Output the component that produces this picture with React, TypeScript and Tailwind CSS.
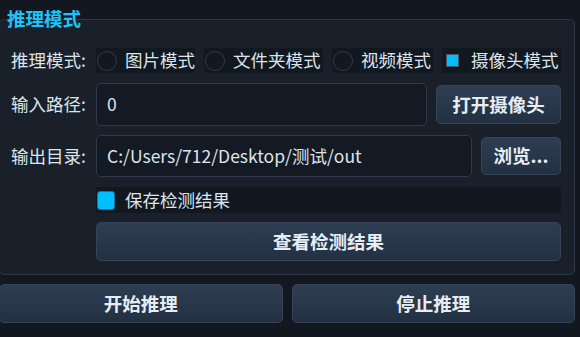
import type React from "react"

const font = { fontFamily: '"Noto Sans CJK SC", "Noto Sans", sans-serif' }

const Radio: React.FC<{ label: string; width: string; checked?: boolean }> = ({ label, width, checked }) => (
  <div className={`flex items-center h-[25px] bg-[#121820] ${width}`}>
    <div className="w-[21px] flex items-center justify-center">
      {checked ? (
        <div className="w-[13px] h-[13px] bg-[#00bfff] border border-[#4a5668]" />
      ) : (
        <div className="w-[20px] h-[20px] rounded-full border border-[#2f3b4b]" />
      )}
    </div>
    <span className="ml-[8px] whitespace-nowrap">{label}</span>
  </div>
)

const Button: React.FC<{ children: React.ReactNode; className?: string }> = ({ children, className }) => (
  <button
    className={`flex items-center justify-center rounded-[5px] border border-[#354457] bg-gradient-to-b from-[#2e3e52] to-[#223042] text-[18.5px] font-bold text-[#e6edf5] ${className ?? ""}`}
  >
    {children}
  </button>
)

export default function App() {
  return (
    <div className="w-[580px] h-[337px] overflow-hidden bg-[#131820] text-[17.5px] text-[#dde4ec]" style={font}>
      <div className="relative mt-[19px] -ml-px w-[576px] h-[256px] rounded-[5px] border border-[#2c3848] bg-[#19202a] pt-[28px] pl-[11px] pr-[13px] pb-[12px]">
        <div className="absolute -top-[14px] left-[7px] text-[18.5px] font-bold leading-[24px] text-[#1cc4f8]">推理模式</div>

        <div className="flex items-center h-[25px]">
          <span className="w-[85px] whitespace-nowrap">推理模式:</span>
          <div className="flex gap-[9px]">
            <Radio label="图片模式" width="w-[99px]" />
            <Radio label="文件夹模式" width="w-[119px]" />
            <Radio label="视频模式" width="w-[101px]" />
            <Radio label="摄像头模式" width="w-[119px]" checked />
          </div>
        </div>

        <div className="flex items-center h-[43px] mt-[10px]">
          <span className="w-[85px]">输入路径:</span>
          <div className="flex-1 h-[43px] flex items-center rounded-[5px] border border-[#2c3a4c] bg-[#141a23] pl-[10px]">0</div>
          <Button className="ml-[9px] w-[125px] h-[39px]">打开摄像头</Button>
        </div>

        <div className="flex items-center h-[42px] mt-[9px]">
          <span className="w-[85px]">输出目录:</span>
          <div className="flex-1 h-[42px] flex items-center rounded-[5px] border border-[#2c3a4c] bg-[#141a23] pl-[10px] whitespace-nowrap">
            C:/Users/712/Desktop/测试/out
          </div>
          <Button className="ml-[9px] w-[80px] h-[38px]">浏览...</Button>
        </div>

        <div className="flex items-center h-[26px] mt-[10px] ml-[85px] bg-[#111820]">
          <div className="ml-px w-[18px] h-[19px] rounded-[3px] bg-[#00bfff] border border-[#1e6e96]" />
          <span className="ml-[10px]">保存检测结果</span>
        </div>

        <Button className="mt-[9px] ml-[85px] w-[465px] h-[39px]">查看检测结果</Button>
      </div>

      <div className="flex gap-[9px] mt-[9px] -ml-px w-[576px]">
        <Button className="flex-1 h-[39px]">开始推理</Button>
        <Button className="flex-1 h-[39px]">停止推理</Button>
      </div>
    </div>
  )
}
